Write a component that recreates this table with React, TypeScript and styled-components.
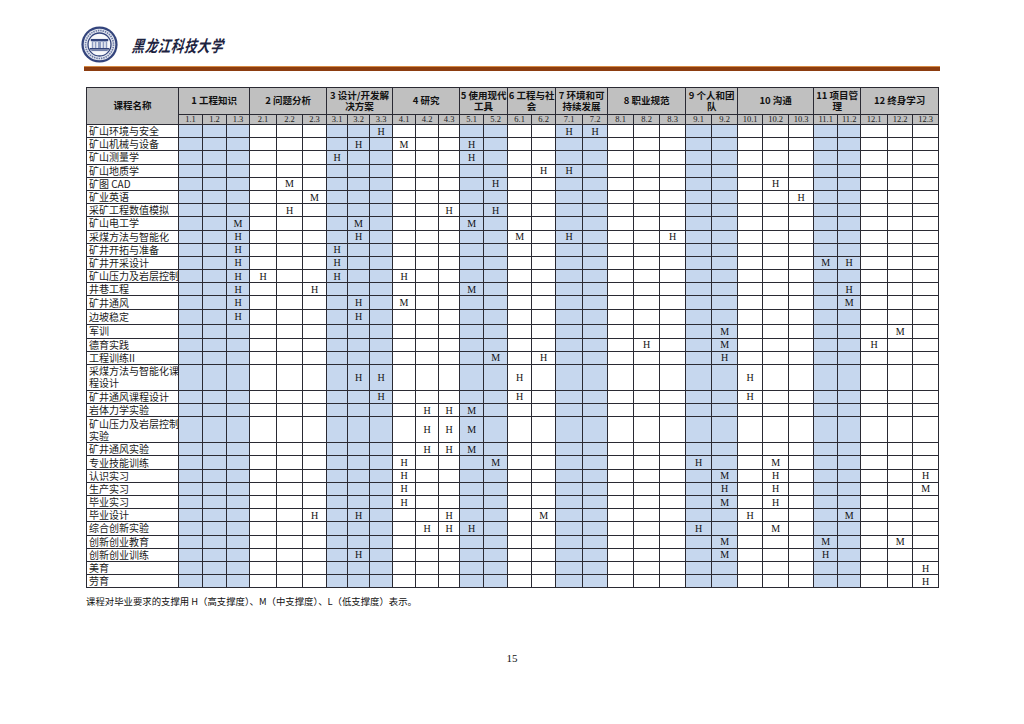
import React from 'react';
import styled, { createGlobalStyle } from 'styled-components';

const GlobalStyle = createGlobalStyle`
  html, body {
    margin: 0;
    padding: 0;
    background: #ffffff;
  }
  body {
    font-family: 'Noto Sans CJK SC', 'Liberation Serif', serif;
    color: #000;
  }
`;

type Group = { label: string; cols: string[]; shaded: boolean };

const groups: Group[] = [
  { label: '1 工程知识', cols: ['1.1', '1.2', '1.3'], shaded: true },
  { label: '2 问题分析', cols: ['2.1', '2.2', '2.3'], shaded: false },
  { label: '3 设计/开发解\n决方案', cols: ['3.1', '3.2', '3.3'], shaded: true },
  { label: '4 研究', cols: ['4.1', '4.2', '4.3'], shaded: false },
  { label: '5 使用现代\n工具', cols: ['5.1', '5.2'], shaded: true },
  { label: '6 工程与社\n会', cols: ['6.1', '6.2'], shaded: false },
  { label: '7 环境和可\n持续发展', cols: ['7.1', '7.2'], shaded: true },
  { label: '8 职业规范', cols: ['8.1', '8.2', '8.3'], shaded: false },
  { label: '9 个人和团\n队', cols: ['9.1', '9.2'], shaded: true },
  { label: '10 沟通', cols: ['10.1', '10.2', '10.3'], shaded: false },
  { label: '11 项目管\n理', cols: ['11.1', '11.2'], shaded: true },
  { label: '12 终身学习', cols: ['12.1', '12.2', '12.3'], shaded: false },
];

const colWidths = [
  24, 24, 23, 27, 26, 24, 21, 22, 23, 23, 23, 21, 24, 24, 24, 24, 27, 25, 26, 26, 26, 26, 26, 25, 26, 25,
  24, 23, 27, 25, 26,
];

const allCols = groups.flatMap((g) => g.cols.map((c) => ({ code: c, shaded: g.shaded })));

type Course = { name: string; size?: 'tall' | 'double'; marks: string };

const courses: Course[] = [
  { name: '矿山环境与安全', marks: '3.3H 7.1H 7.2H' },
  { name: '矿山机械与设备', marks: '3.2H 4.1M 5.1H' },
  { name: '矿山测量学', marks: '3.1H 5.1H' },
  { name: '矿山地质学', marks: '6.2H 7.1H' },
  { name: '矿图 CAD', marks: '2.2M 5.2H 10.2H' },
  { name: '矿业英语', marks: '2.3M 10.3H' },
  { name: '采矿工程数值模拟', marks: '2.2H 4.3H 5.2H' },
  { name: '矿山电工学', marks: '1.3M 3.2M 5.1M' },
  { name: '采煤方法与智能化', marks: '1.3H 3.2H 6.1M 7.1H 8.3H' },
  { name: '矿井开拓与准备', marks: '1.3H 3.1H' },
  { name: '矿井开采设计', marks: '1.3H 3.1H 11.1M 11.2H' },
  { name: '矿山压力及岩层控制', marks: '1.3H 2.1H 3.1H 4.1H' },
  { name: '井巷工程', marks: '1.3H 2.3H 5.1M 11.2H' },
  { name: '矿井通风', marks: '1.3H 3.2H 4.1M 11.2M' },
  { name: '边坡稳定', size: 'tall', marks: '1.3H 3.2H' },
  { name: '军训', marks: '9.2M 12.2M' },
  { name: '德育实践', marks: '8.2H 9.2M 12.1H' },
  { name: '工程训练II', marks: '5.2M 6.2H 9.2H' },
  { name: '采煤方法与智能化课\n程设计', size: 'double', marks: '3.2H 3.3H 6.1H 10.1H' },
  { name: '矿井通风课程设计', marks: '3.3H 6.1H 10.1H' },
  { name: '岩体力学实验', marks: '4.2H 4.3H 5.1M' },
  { name: '矿山压力及岩层控制\n实验', size: 'double', marks: '4.2H 4.3H 5.1M' },
  { name: '矿井通风实验', marks: '4.2H 4.3H 5.1M' },
  { name: '专业技能训练', marks: '4.1H 5.2M 9.1H 10.2M' },
  { name: '认识实习', marks: '4.1H 9.2M 10.2H 12.3H' },
  { name: '生产实习', marks: '4.1H 9.2H 10.2H 12.3M' },
  { name: '毕业实习', marks: '4.1H 9.2M 10.2H' },
  { name: '毕业设计', marks: '2.3H 3.2H 4.3H 6.2M 10.1H 11.2M' },
  { name: '综合创新实验', marks: '4.2H 4.3H 5.1H 9.1H 10.2M' },
  { name: '创新创业教育', marks: '9.2M 11.1M 12.2M' },
  { name: '创新创业训练', marks: '3.2H 9.2M 11.1H' },
  { name: '美育', marks: '12.3H' },
  { name: '劳育', marks: '12.3H' },
];

const parseMarks = (marks: string) => {
  const map: Record<string, string> = {};
  marks.split(' ').forEach((m) => {
    map[m.slice(0, -1)] = m.slice(-1);
  });
  return map;
};

// row heights measured off the page, border included
const rowHeights = { normal: 13.2, tall: 15.7, double: 26 };

const Logo = () => (
  <svg width="37" height="37" viewBox="0 0 36 36">
    <circle cx="18" cy="18" r="17.6" fill="#33447c" />
    <circle cx="18" cy="18" r="15.4" fill="#e3e7f0" />
    <circle cx="18" cy="18" r="13.6" fill="none" stroke="#6b79a4" strokeWidth="1.6" strokeDasharray="1.4 0.9" />
    <circle cx="18" cy="18" r="11.2" fill="#f7f8fb" stroke="#33447c" strokeWidth="1.3" />
    <rect x="9.5" y="12.6" width="17" height="2.2" fill="#33447c" />
    <rect x="10.5" y="14.8" width="15" height="6.6" fill="#8e9dc2" />
    <rect x="12" y="15.6" width="1.4" height="5.8" fill="#f7f8fb" />
    <rect x="15" y="15.6" width="1.4" height="5.8" fill="#f7f8fb" />
    <rect x="19.6" y="15.6" width="1.4" height="5.8" fill="#f7f8fb" />
    <rect x="22.6" y="15.6" width="1.4" height="5.8" fill="#f7f8fb" />
    <rect x="8.5" y="21.4" width="19" height="1.6" fill="#33447c" />
    <rect x="10" y="23.4" width="16" height="1" fill="#6b79a4" />
  </svg>
);

export default function App() {
  return (
    <Page>
      <GlobalStyle />
      <Masthead>
        <Logo />
        <SchoolName>黑龙江科技大学</SchoolName>
      </Masthead>
      <Rule />
      <Matrix>
        <colgroup>
          <col style={{ width: 92 }} />
          {colWidths.map((w, i) => (
            <col key={i} style={{ width: w }} />
          ))}
        </colgroup>
        <thead>
          <tr>
            <HeadCell rowSpan={2}>课程名称</HeadCell>
            {groups.map((g) => (
              <HeadCell key={g.label} colSpan={g.cols.length}>
                {g.label}
              </HeadCell>
            ))}
          </tr>
          <tr>
            {allCols.map((c) => (
              <SubCell key={c.code}>{c.code}</SubCell>
            ))}
          </tr>
        </thead>
        <tbody>
          {courses.map((course) => {
            const marks = parseMarks(course.marks);
            const h = rowHeights[course.size ?? 'normal'];
            return (
              <tr key={course.name}>
                <NameCell>
                  <NameText $h={h - 1}>{course.name}</NameText>
                </NameCell>
                {allCols.map((c) => (
                  <MarkCell key={c.code} $shaded={c.shaded}>
                    <MarkText $h={h - 1}>{marks[c.code] ?? ''}</MarkText>
                  </MarkCell>
                ))}
              </tr>
            );
          })}
        </tbody>
      </Matrix>
      <Footnote>课程对毕业要求的支撑用 H（高支撑度）、M（中支撑度）、L（低支撑度）表示。</Footnote>
      <PageNumber>15</PageNumber>
    </Page>
  );
}

const Page = styled.div`
  width: 1024px;
  height: 724px;
  padding-top: 26px;
  box-sizing: border-box;
  background: #ffffff;
  overflow: hidden;
`;

const Masthead = styled.div`
  display: flex;
  align-items: center;
  gap: 14px;
  margin-left: 81px;
  height: 37px;
`;

const SchoolName = styled.div`
  font-family: 'Noto Sans CJK SC', sans-serif;
  font-size: 12.5px;
  font-weight: 700;
  font-style: italic;
  letter-spacing: 0.6px;
  color: #1d2340;
  transform: scaleY(1.3) skewX(-8deg);
  line-height: 18px;
`;

const Rule = styled.div`
  margin: 3px 0 0 84px;
  width: 856px;
  height: 5px;
  background: linear-gradient(to bottom, #d58a45 0 1px, #fbe9d8 1px 1.5px, #8c3d10 1.5px 5px);
`;

const Matrix = styled.table`
  margin: 16px 0 0 86px;
  width: 852px;
  table-layout: fixed;
  border-collapse: collapse;

  td,
  th {
    border: 1px solid #2a2a33;
    padding: 0;
  }
`;

const HeadCell = styled.th`
  height: 26px;
  background: #c0c0c0;
  font-family: 'Noto Sans CJK SC', sans-serif;
  font-size: 9.5px;
  font-weight: 700;
  line-height: 11.5px;
  text-align: center;
  vertical-align: middle;
  white-space: pre;
  color: #111;
`;

const SubCell = styled.th`
  height: 9px;
  background: #c0c0c0;
  font-family: 'Liberation Serif', serif;
  font-size: 8.5px;
  font-weight: 400;
  line-height: 9px;
  text-align: center;
  color: #222;
`;

const NameCell = styled.td`
  text-align: left;
  vertical-align: middle;
`;

const NameText = styled.div<{ $h: number }>`
  height: ${({ $h }) => $h}px;
  padding-left: 2px;
  display: flex;
  align-items: center;
  font-family: 'Noto Sans CJK SC', sans-serif;
  font-size: 10px;
  line-height: 12px;
  white-space: pre;
  color: #1a1a1a;
`;

const MarkCell = styled.td<{ $shaded: boolean }>`
  background: ${({ $shaded }) => ($shaded ? '#c6d7ee' : '#ffffff')};
  vertical-align: middle;
`;

const MarkText = styled.div<{ $h: number }>`
  height: ${({ $h }) => $h}px;
  display: flex;
  align-items: center;
  justify-content: center;
  font-family: 'Liberation Serif', serif;
  font-size: 10px;
  line-height: 11px;
  color: #111;
`;

const Footnote = styled.p`
  margin: 7px 0 0 86px;
  font-family: 'Noto Sans CJK SC', sans-serif;
  font-size: 9.4px;
  line-height: 12px;
  color: #111;
`;

const PageNumber = styled.div`
  margin-top: 45px;
  text-align: center;
  font-family: 'Liberation Serif', serif;
  font-size: 11px;
  line-height: 12px;
  color: #111;
`;
